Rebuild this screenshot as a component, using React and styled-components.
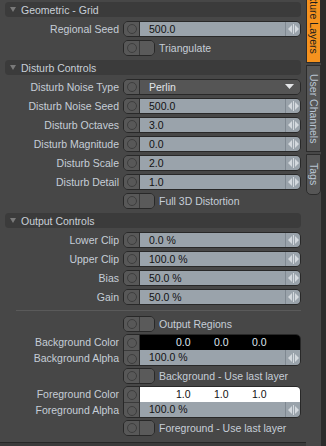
import React from "react";
import styled, { createGlobalStyle } from "styled-components";

const GlobalStyle = createGlobalStyle`
  html, body {
    margin: 0;
    padding: 0;
    background: #3a3a3a;
  }
  body {
    font-family: "Liberation Sans", Arial, sans-serif;
    font-size: 10.5px;
  }
`;

const Spinner = () => (
  <svg width="13" height="12" viewBox="0 0 13 12">
    <polygon points="5,2 5,10 1,6" fill="#d4d9de" />
    <rect x="6" y="1" width="1" height="10" fill="#d4d9de" />
    <polygon points="8,2 8,10 12,6" fill="#d4d9de" />
  </svg>
);

const DownArrow = () => (
  <svg width="9" height="6" viewBox="0 0 9 6">
    <polygon points="0,0 9,0 4.5,5" fill="#e4e6e8" />
  </svg>
);

const Section = ({ title, children }) => (
  <>
    <Header>
      <Caret />
      {title}
    </Header>
    <Rows>{children}</Rows>
  </>
);

const NumberRow = ({ label, value }) => (
  <Row>
    <Label>{label}</Label>
    <Field>
      <Knob />
      <Value>{value}</Value>
      <Spin>
        <Spinner />
      </Spin>
    </Field>
  </Row>
);

const ChoiceRow = ({ label, value }) => (
  <Row>
    <Label>{label}</Label>
    <Field>
      <Knob />
      <Choice>
        {value}
        <DownArrow />
      </Choice>
    </Field>
  </Row>
);

const ToggleRow = ({ label }) => (
  <Row>
    <span />
    <ToggleLine>
      <Toggle>
        <Knob />
        <ToggleHalf />
      </Toggle>
      <ToggleLabel>{label}</ToggleLabel>
    </ToggleLine>
  </Row>
);

const ColorRows = ({ name, values, light }) => (
  <ColorBlock>
    <Label>{name} Color</Label>
    <ColorField>
      <KnobColumn>
        <Knob />
        <Knob />
      </KnobColumn>
      <div>
        <Swatch $light={light}>
          {values.map((v, i) => (
            <span key={i}>{v}</span>
          ))}
        </Swatch>
        <AlphaLine>
          <Value>100.0 %</Value>
          <Spin>
            <Spinner />
          </Spin>
        </AlphaLine>
      </div>
    </ColorField>
    <Label>{name} Alpha</Label>
  </ColorBlock>
);

export default function App() {
  return (
    <>
      <GlobalStyle />
      <Frame>
        <Panel>
          <Section title="Geometric - Grid">
            <NumberRow label="Regional Seed" value="500.0" />
            <ToggleRow label="Triangulate" />
          </Section>
          <Section title="Disturb Controls">
            <ChoiceRow label="Disturb Noise Type" value="Perlin" />
            <NumberRow label="Disturb Noise Seed" value="500.0" />
            <NumberRow label="Disturb Octaves" value="3.0" />
            <NumberRow label="Disturb Magnitude" value="0.0" />
            <NumberRow label="Disturb Scale" value="2.0" />
            <NumberRow label="Disturb Detail" value="1.0" />
            <ToggleRow label="Full 3D Distortion" />
          </Section>
          <Section title="Output Controls">
            <NumberRow label="Lower Clip" value="0.0 %" />
            <NumberRow label="Upper Clip" value="100.0 %" />
            <NumberRow label="Bias" value="50.0 %" />
            <NumberRow label="Gain" value="50.0 %" />
          </Section>
          <Divider />
          <Tail>
            <ToggleRow label="Output Regions" />
            <ColorRows name="Background" values={["0.0", "0.0", "0.0"]} />
            <ToggleRow label="Background - Use last layer" />
            <ColorRows name="Foreground" values={["1.0", "1.0", "1.0"]} light />
            <ToggleRow label="Foreground - Use last layer" />
          </Tail>
        </Panel>
        <TabStrip>
          <Tab $active $top>Texture Layers</Tab>
          <Tab>User Channels</Tab>
          <Tab $last>Tags</Tab>
        </TabStrip>
        <Edge />
      </Frame>
    </>
  );
}

const Frame = styled.div`
  display: flex;
  height: 446px;
  overflow: hidden;
`;

const Panel = styled.div`
  width: 306px;
  height: 443px;
  box-sizing: border-box;
  padding: 2px 5px 0 0;
  background: #474747;
  border-bottom: 1px solid #262626;
  display: flex;
  flex-direction: column;
`;

const Header = styled.div`
  height: 15px;
  margin-left: 5px;
  border-radius: 4px;
  background: #3b3b3b;
  color: #c9d0d8;
  display: flex;
  align-items: center;
  gap: 5px;
  padding-left: 5px;
`;

const Caret = styled.span`
  width: 0;
  height: 0;
  border-left: 3px solid transparent;
  border-right: 3px solid transparent;
  border-top: 5px solid #7a7a7a;
`;

const Rows = styled.div`
  display: flex;
  flex-direction: column;
  gap: 3px;
  padding: 4px 0;
`;

const Row = styled.div`
  display: grid;
  grid-template-columns: 119px 178px;
  column-gap: 4px;
  height: 16px;
  align-items: center;
`;

const Label = styled.span`
  text-align: right;
  color: #c6ced7;
  white-space: nowrap;
`;

const Field = styled.div`
  display: flex;
  height: 16px;
  box-sizing: border-box;
  border: 1px solid #282828;
  border-radius: 5px;
  overflow: hidden;
`;

const Knob = styled.div`
  width: 15px;
  flex: 0 0 15px;
  height: 14px;
  background: #585858;
  display: flex;
  align-items: center;
  justify-content: center;
  &::after {
    content: "";
    width: 8px;
    height: 8px;
    border-radius: 50%;
    border: 1px solid #3e3e3e;
  }
`;

const Value = styled.div`
  flex: 1;
  background: #9aa3ab;
  color: #121212;
  border-left: 1px solid #2e2e2e;
  padding-left: 9px;
  line-height: 14px;
`;

const Spin = styled.div`
  width: 14px;
  background: #9aa3ab;
  border-left: 1px solid #7f8891;
  display: flex;
  align-items: center;
  justify-content: center;
`;

const Choice = styled.div`
  flex: 1;
  background: #555555;
  border-left: 1px solid #2e2e2e;
  color: #e2e6ea;
  padding: 0 6px 0 9px;
  line-height: 14px;
  display: flex;
  align-items: center;
  justify-content: space-between;
`;

const ToggleLine = styled.div`
  display: flex;
  align-items: center;
  gap: 4px;
`;

const Toggle = styled(Field)`
  width: 32px;
`;

const ToggleHalf = styled.div`
  flex: 1;
  background: #5a5a5a;
  border-left: 1px solid #3a3a3a;
`;

const ToggleLabel = styled.span`
  color: #c6ced7;
  white-space: nowrap;
`;

const Divider = styled.div`
  height: 1px;
  margin: 1px 0 5px 16px;
  background: #5a5a5a;
`;

const Tail = styled.div`
  display: flex;
  flex-direction: column;
  gap: 2px;
`;

const ColorBlock = styled.div`
  display: grid;
  grid-template-columns: 119px 178px;
  grid-template-rows: 16px 16px;
  column-gap: 4px;
  align-items: center;
  & > ${Label}:last-child {
    grid-column: 1;
    grid-row: 2;
  }
`;

const ColorField = styled.div`
  grid-column: 2;
  grid-row: 1 / span 2;
  display: flex;
  height: 32px;
  box-sizing: border-box;
  border: 1px solid #282828;
  border-radius: 5px;
  overflow: hidden;
  & > div:last-child {
    flex: 1;
    display: flex;
    flex-direction: column;
  }
`;

const KnobColumn = styled.div`
  display: flex;
  flex-direction: column;
  & > div:first-child {
    height: 15px;
    border-bottom: 1px solid #3a3a3a;
  }
`;

const Swatch = styled.div`
  height: 15px;
  background: ${(p) => (p.$light ? "#ffffff" : "#000000")};
  color: ${(p) => (p.$light ? "#111111" : "#dfe6ee")};
  border-left: 1px solid #2e2e2e;
  display: grid;
  grid-template-columns: repeat(3, 38px);
  padding-left: 36px;
  line-height: 15px;
`;

const AlphaLine = styled.div`
  flex: 1;
  display: flex;
`;

const TabStrip = styled.div`
  width: 15px;
  display: flex;
  flex-direction: column;
  gap: 2px;
  background: #474747;
`;

const Tab = styled.div`
  writing-mode: vertical-rl;
  box-sizing: border-box;
  width: 15px;
  padding: 8px 0;
  margin-top: ${(p) => (p.$top ? "-24px" : "0")};
  background: ${(p) => (p.$active ? "#f5921e" : "#565656")};
  color: ${(p) => (p.$active ? "#1c1c1c" : "#b9c5d2")};
  border: 1px solid #2c2c2c;
  border-radius: ${(p) => (p.$last ? "0 0 5px 5px" : "0")};
  display: flex;
  align-items: center;
  line-height: 13px;
  white-space: nowrap;
`;

const Edge = styled.div`
  flex: 1;
  background: #2b2b2b;
`;
